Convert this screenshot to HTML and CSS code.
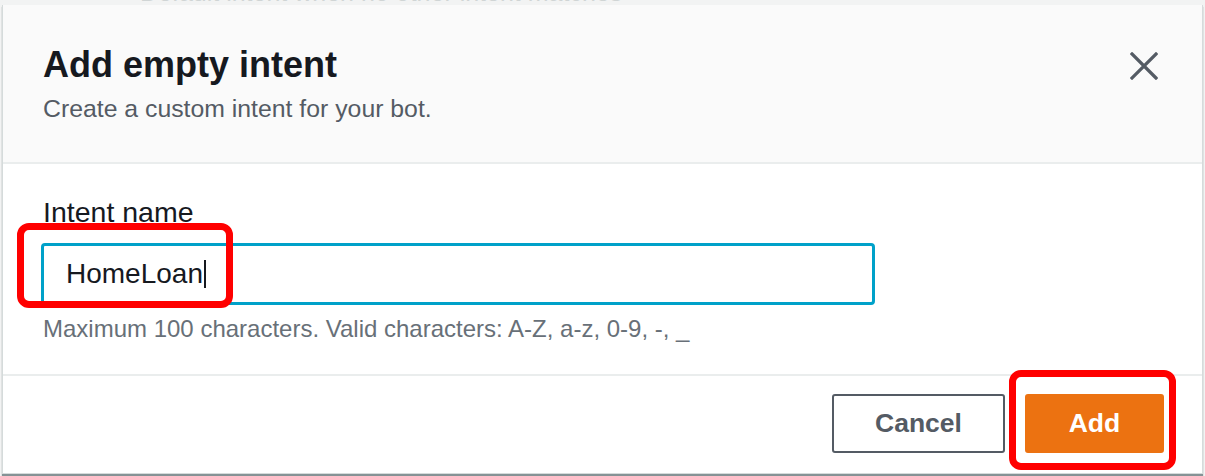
FILE: index.html
```html
<!DOCTYPE html>
<html lang="en">
<head>
<meta charset="utf-8">
<title>Add empty intent</title>
<link rel="stylesheet" href="styles.css">
</head>
<body>
<div class="behind"><p>Default intent when no other intent matches</p></div>
<div class="modal">
  <header class="modal-header">
    <div class="heading">
      <h1 class="title">Add empty intent</h1>
      <p class="subtitle">Create a custom intent for your bot.</p>
    </div>
    <button class="close" aria-label="Close">
      <svg width="28" height="28" viewBox="0 0 28 28"><path d="M2 2 L26 26 M26 2 L2 26" stroke="#545b64" stroke-width="3.2" stroke-linecap="square" fill="none"/></svg>
    </button>
  </header>
  <section class="modal-body">
    <label class="label">Intent name</label>
    <div class="input">
      <span class="value">HomeLoan</span><span class="caret"></span>
      <span class="mark mark-input"></span>
    </div>
    <p class="hint">Maximum 100 characters. Valid characters: A-Z, a-z, 0-9, -, _</p>
  </section>
  <footer class="modal-footer">
    <button class="btn btn-cancel">Cancel</button>
    <button class="btn btn-add">Add<span class="mark mark-add"></span></button>
  </footer>
</div>
</body>
</html>
```
FILE: styles.css
```css
* { box-sizing: border-box; }
html, body { margin: 0; padding: 0; }
body {
  background: #f2f3f3;
  font-family: "Liberation Sans", Arial, sans-serif;
  color: #16191f;
  height: 476px;
  overflow: hidden;
}
.behind {
  height: 5px;
  overflow: hidden;
  padding-left: 140px;
}
.behind p {
  margin: -19px 0 0;
  font-size: 25px;
  line-height: 22px;
  color: #d0d5d5;
}
.modal {
  margin: 0 2px 0 2px;
  background: #fff;
  border: 1px solid #d5dbdb;
  border-top: none;
  box-shadow: 0 2px 1px 0 rgba(0, 28, 36, 0.45);
}
.modal-header {
  display: flex;
  justify-content: space-between;
  align-items: flex-start;
  background: #fafafa;
  border-bottom: 2px solid #eaeded;
  padding: 38px 44px 37px 40px;
}
.title {
  margin: 0;
  font-size: 36px;
  line-height: 44px;
  font-weight: 700;
  color: #16191f;
}
.subtitle {
  margin: 6px 0 0;
  font-size: 24.8px;
  line-height: 32px;
  color: #545b64;
}
.close {
  margin-top: 9px;
  padding: 0;
  border: none;
  background: none;
  width: 28px;
  height: 28px;
}
.close svg { display: block; }
.modal-body {
  padding: 30px 38px 29px;
}
.label {
  display: block;
  font-size: 28.5px;
  line-height: 36px;
  color: #16191f;
  margin: 0 0 13px 2px;
}
.input {
  position: relative;
  width: 834px;
  height: 62px;
  border: 3px solid #00a1c9;
  border-radius: 4px;
  display: flex;
  align-items: center;
  padding-left: 22px;
}
.value {
  font-size: 28px;
  color: #16191f;
}
.caret {
  width: 2px;
  height: 28px;
  background: #16191f;
  margin-left: 1px;
}
.hint {
  margin: 8px 0 0 2px;
  font-size: 24px;
  line-height: 32px;
  color: #687078;
}
.modal-footer {
  border-top: 2px solid #eaeded;
  display: flex;
  justify-content: flex-end;
  gap: 20px;
  padding: 18px 38px 20px;
}
.btn {
  position: relative;
  height: 59px;
  font-family: "Liberation Sans", Arial, sans-serif;
  font-weight: 700;
  font-size: 26.5px;
  border-radius: 3px;
  cursor: pointer;
}
.btn-cancel {
  width: 173px;
  background: #fff;
  color: #545b64;
  border: 2px solid #545b64;
}
.btn-add {
  width: 139px;
  background: #ec7211;
  color: #fff;
  border: 2px solid #ec7211;
}
.mark {
  position: absolute;
  border: 7px solid #ff0000;
  border-radius: 12px;
  pointer-events: none;
}
.mark-input {
  left: -27px;
  top: -23px;
  width: 216px;
  height: 85px;
}
.mark-add {
  left: -18px;
  top: -26px;
  right: -14px;
  bottom: -19px;
}
```
